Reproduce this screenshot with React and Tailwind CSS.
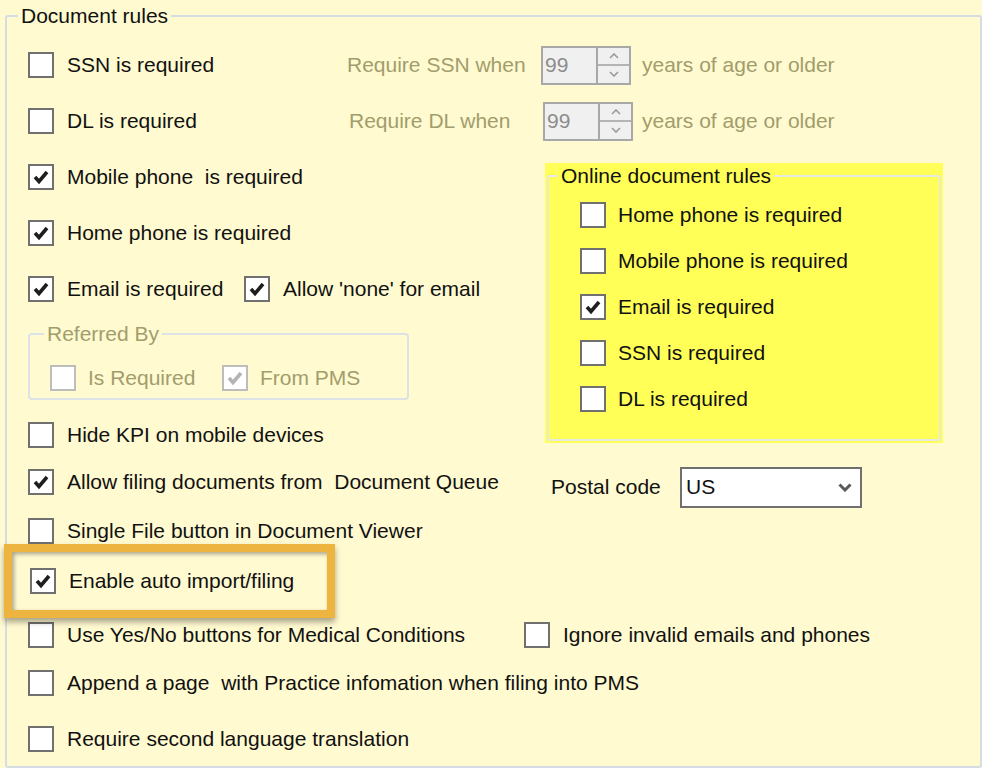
import React from 'react'

const DIM = 'text-[#a29d6c]'

function Check({ checked = false, disabled = false }) {
  return (
    <div
      className={
        'w-[26px] h-[26px] shrink-0 border-2 bg-white flex items-center justify-center ' +
        (disabled ? 'border-[#bdbdbd]' : 'border-[#707070]')
      }
    >
      {checked && (
        <svg width="18" height="18" viewBox="0 0 18 18">
          <path
            d="M3 9 L7 13.5 L15 4"
            fill="none"
            stroke={disabled ? '#b4b4b4' : '#1e1e1e'}
            strokeWidth="3.6"
          />
        </svg>
      )}
    </div>
  )
}

function Item({ checked, disabled, children, className = '' }) {
  return (
    <div className={'flex items-center gap-[13px] ' + className}>
      <Check checked={checked} disabled={disabled} />
      <span className={'whitespace-pre ' + (disabled ? DIM : '')}>{children}</span>
    </div>
  )
}

function Spinner() {
  return (
    <div className="w-[90px] h-[39px] border-2 border-[#a8a8a8] bg-[#f0f0f0] flex">
      <span className="flex-1 pl-[2px] leading-[33px] text-[#8c8c8c]">99</span>
      <div className="w-[33px] border-l-2 border-[#a8a8a8] flex flex-col">
        <div className="flex-1 flex items-center justify-center border-b-2 border-[#b4b4b4]">
          <svg width="10" height="6" viewBox="0 0 10 6">
            <path d="M1 5 L5 1 L9 5" fill="none" stroke="#9a9a9a" strokeWidth="1.6" />
          </svg>
        </div>
        <div className="flex-1 flex items-center justify-center">
          <svg width="10" height="6" viewBox="0 0 10 6">
            <path d="M1 1 L5 5 L9 1" fill="none" stroke="#9a9a9a" strokeWidth="1.6" />
          </svg>
        </div>
      </div>
    </div>
  )
}

const ONLINE_RULES = [
  { label: 'Home phone is required', checked: false },
  { label: 'Mobile phone is required', checked: false },
  { label: 'Email is required', checked: true },
  { label: 'SSN is required', checked: false },
  { label: 'DL is required', checked: false },
]

export default function App() {
  return (
    <div className="w-[986px] h-[772px] bg-white">
      <div className="w-[982px] h-[768px] bg-[#fffad0] pt-[4px] pl-[5px] font-['Liberation_Sans',Arial,sans-serif] text-[21px] text-[#111]">
        <fieldset className="w-[977px] h-[764px] border-2 border-[#d5dce4] rounded-[3px] pl-[21px] pt-[10px]">
          <legend className="ml-[-10px] px-[3px] leading-[23px]">Document rules</legend>

          {/* SSN / DL with age spinners */}
          <div className="h-[56px] flex items-center">
            <Item className="w-[319px]">SSN is required</Item>
            <span className={'w-[194px] ' + DIM}>Require SSN when</span>
            <Spinner />
            <span className={'ml-[11px] ' + DIM}>years of age or older</span>
          </div>
          <div className="h-[56px] flex items-center">
            <Item className="w-[321px]">DL is required</Item>
            <span className={'w-[194px] ' + DIM}>Require DL when</span>
            <Spinner />
            <span className={'ml-[9px] ' + DIM}>years of age or older</span>
          </div>

          <div className="flex">
            <div className="w-[517px] flex flex-col">
              <Item checked className="h-[56px]">Mobile phone  is required</Item>
              <Item checked className="h-[56px]">Home phone is required</Item>
              <div className="h-[56px] flex items-center">
                <Item checked className="w-[216px]">Email is required</Item>
                <Item checked>Allow 'none' for email</Item>
              </div>

              {/* Referred By */}
              <fieldset className="mt-[5px] w-[381px] h-[78px] border-2 border-[#dde2e6] rounded-[4px] pl-[20px] pt-[17px]">
                <legend className={'ml-[-6px] px-[3px] leading-[23px] ' + DIM}>Referred By</legend>
                <div className="flex items-center">
                  <div className="w-[172px] flex items-center gap-[12px]">
                    <Check disabled />
                    <span className={DIM}>Is Required</span>
                  </div>
                  <div className="flex items-center gap-[12px]">
                    <Check checked disabled />
                    <span className={DIM}>From PMS</span>
                  </div>
                </div>
              </fieldset>

              <Item className="mt-[12px] h-[46px]">Hide KPI on mobile devices</Item>
            </div>

            {/* Online document rules */}
            <div className="mt-[14px] w-[398px] h-[280px] bg-[#ffff58] pt-[1px] px-[2px]">
              <fieldset className="h-[277px] border-2 border-[#e6e8e2] rounded-[3px] pl-[31px] pt-[5px]">
                <legend className="ml-[-22px] px-[3px] leading-[23px]">Online document rules</legend>
                {ONLINE_RULES.map(r => (
                  <div key={r.label} className="h-[46px] flex items-center gap-[12px]">
                    <Check checked={r.checked} />
                    <span>{r.label}</span>
                  </div>
                ))}
              </fieldset>
            </div>
          </div>

          <div className="h-[48px] flex items-center">
            <Item checked className="w-[523px]">Allow filing documents from  Document Queue</Item>
            <div className="mt-[10px] flex items-center">
              <span className="w-[129px]">Postal code</span>
              <div className="w-[182px] h-[41px] border-2 border-[#707070] bg-white flex items-center pl-[4px] pr-[8px]">
                <span className="flex-1">US</span>
                <svg width="14" height="9" viewBox="0 0 14 9">
                  <path d="M1.5 1.5 L7 7 L12.5 1.5" fill="none" stroke="#5a5a5a" strokeWidth="3" />
                </svg>
              </div>
            </div>
          </div>

          <Item className="h-[50px]">Single File button in Document Viewer</Item>

          <div className="relative h-[50px] flex items-center pl-[2px]">
            <div className="absolute left-[-24px] top-[-12px] w-[331px] h-[74px] border-[8px] border-[#edb53f] shadow-[0_4px_6px_rgba(0,0,0,0.35),inset_2px_2px_4px_rgba(0,0,0,0.35)]" />
            <Item checked>Enable auto import/filing</Item>
          </div>

          <div className="h-[58px] flex items-center">
            <Item className="w-[496px]">Use Yes/No buttons for Medical Conditions</Item>
            <Item className="gap-[12px]">Ignore invalid emails and phones</Item>
          </div>

          <Item className="h-[38px]">Append a page  with Practice infomation when filing into PMS</Item>
          <Item className="mt-[12px] h-[50px]">Require second language translation</Item>
        </fieldset>
      </div>
    </div>
  )
}
